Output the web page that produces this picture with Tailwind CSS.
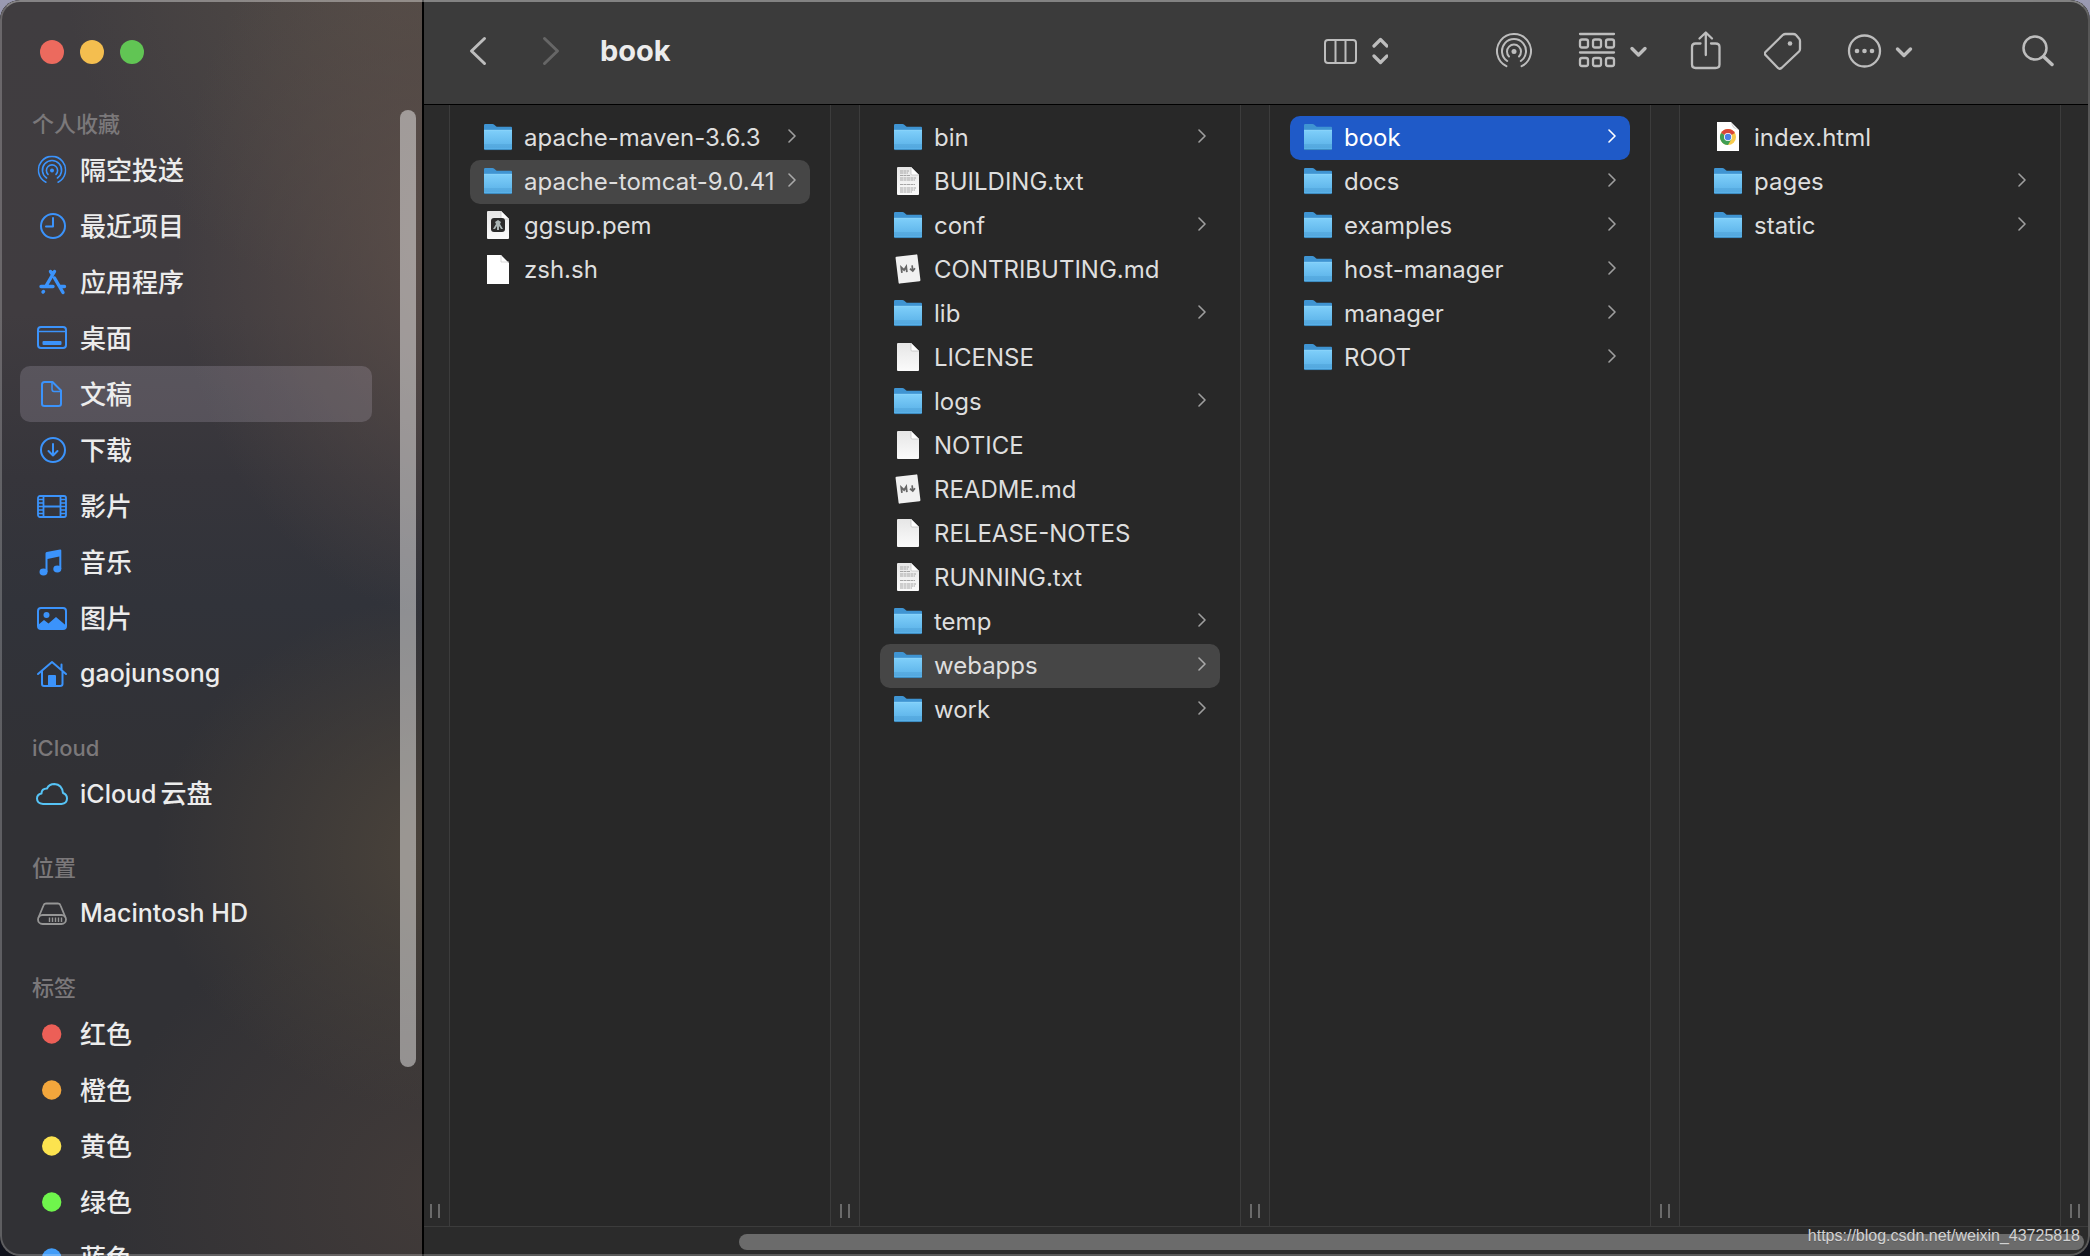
<!DOCTYPE html>
<html lang="zh-CN">
<head>
<meta charset="utf-8">
<title>book</title>
<script src="https://cdn.jsdelivr.net/npm/@tailwindcss/browser@4"></script>
</head>
<body class="h-screen overflow-hidden bg-linear-to-b from-[#9a9ab2] via-[#1c1c22] to-[#10121c] font-[Inter,'Noto_Sans_CJK_SC',sans-serif]">

<svg class="absolute size-0" aria-hidden="true">
  <defs>
    <linearGradient id="folderFront" x1="0" y1="0" x2="0" y2="1"><stop offset="0" stop-color="#7fcffa"/><stop offset="1" stop-color="#56aee6"/></linearGradient>
    <linearGradient id="paper" x1="0" y1="0" x2="0" y2="1"><stop offset="0" stop-color="#e6e6e6"/><stop offset="1" stop-color="#fbfbfb"/></linearGradient>
  </defs>
  <symbol id="folder" viewBox="0 0 28 32">
    <path d="M0 3.2Q0 2 1.2 2H8.500Q9.500 2 10.300 2.700L12 4.200Q12.600 4.800 13.600 4.800H27Q28 4.800 28 5.800V12H0Z" fill="#3f94d2"/>
    <path d="M0 8.200H28V26.600Q28 28 26.800 28H1.200Q0 28 0 26.600Z" fill="url(#folderFront)"/>
    <path d="M0 8.300H28" stroke="#96dcff" stroke-width=".8"/>
    <path d="M0 23H28M0 25H28" stroke="#4799d0" stroke-width=".7"/>
    <path d="M.5 27.600H27.500" stroke="#3580b4" stroke-width=".8"/>
  </symbol>
  <symbol id="page" viewBox="0 0 28 32">
    <path d="M3 2Q3 1 4 1H17L25 9V28Q25 29 24 29H4Q3 29 3 28Z" fill="url(#paper)"/>
    <path d="M17 1L25 9H18Q17 9 17 8Z" fill="#fff"/><path d="M17 1V8Q17 9 18 9H25" fill="none" stroke="#bdbdbd" stroke-width=".7"/>
  </symbol>
  <symbol id="page-white" viewBox="0 0 28 32">
    <path d="M3 1H17L25 9V30H3Z" fill="#fff"/>
    <path d="M17 1V8H25" fill="none" stroke="#cfcfcf" stroke-width=".8"/>
  </symbol>
  <symbol id="page-text" viewBox="0 0 28 32">
    <use href="#page"/>
    <path d="M6 5H15M6 7H14M6 9.500H16M6 12H22M6 14H21M6 18.500H21M6 22H22M6 24H21M6 26H18" stroke="#a5a5a5" stroke-width="1.200" stroke-dasharray="3 .5"/>
  </symbol>
  <symbol id="page-key" viewBox="0 0 28 32">
    <use href="#page"/>
    <rect x="7" y="8" width="14" height="14" rx="3" fill="#2b2b2b"/>
    <path d="M11 12L14 10L17 12L16 14L19 19H17L15 16V20H13V16L11 19H9L12 14Z" fill="#a9b4b4"/>
  </symbol>
  <symbol id="page-md" viewBox="0 0 28 32">
    <g transform="rotate(-7 14 15)"><rect x="3" y="1.500" width="22" height="27" rx="1" fill="#f1f1f1"/>
    <path d="M7.500 18V12.500L10 15.500L12.500 12.500V18" fill="none" stroke="#666" stroke-width="1.800"/>
    <path d="M18.500 12V17M16 15L18.500 17.600L21 15" fill="none" stroke="#666" stroke-width="1.700"/></g>
  </symbol>
  <symbol id="page-chrome" viewBox="0 0 28 32">
    <path d="M3 0H17L25 8V29H3Z" fill="#fff"/><path d="M17 0Q19 5 25 8L22 7Q18 6 17 0Z" fill="#cfcfcf"/>
    <circle cx="14" cy="15" r="8" fill="#f7cb4d"/>
    <path d="M14 15L7.070 11A8 8 0 0 1 20.930 11Z" fill="#d8473a"/>
    <path d="M14 15L7.070 11A8 8 0 0 0 14 23L17.500 17Z" fill="#3f9e55"/>
    <circle cx="14" cy="15" r="4" fill="#fff"/><circle cx="14" cy="15" r="3.200" fill="#4a7fe8"/>
  </symbol>
  <symbol id="go" viewBox="0 0 8 14"><path d="M1 1L7 7L1 13" fill="none" stroke="currentColor" stroke-width="1.600" stroke-linecap="round" stroke-linejoin="round"/></symbol>
  <symbol id="airdrop" viewBox="0 0 36 36">
    <g fill="none" stroke="currentColor" stroke-width="2" stroke-linecap="round">
      <path d="M10.400 33.200A17 17 0 1 1 25.600 33.200"/><path d="M11.200 28A12 12 0 1 1 24.800 28"/><path d="M13 23.500A7 7 0 1 1 23 23.500"/>
    </g><circle cx="18" cy="18.500" r="2.500" fill="currentColor"/>
  </symbol>
</svg>

<div class="relative flex h-full overflow-hidden rounded-[20px] bg-[#282828]">

  <aside class="relative w-106 shrink-0 overflow-hidden border-r-2 border-black bg-[radial-gradient(ellipse_280px_380px_at_108%_19%,#5a4d48,transparent),radial-gradient(ellipse_360px_360px_at_100%_-4%,#554d47,transparent),radial-gradient(ellipse_300px_260px_at_108%_68%,#4c443b,transparent),radial-gradient(ellipse_340px_300px_at_105%_95%,#423b39,transparent),linear-gradient(180deg,#403d40_0%,#403c40_25%,#36353b_38%,#31333a_48%,#313135_62%,#313135_100%)]">
    <div class="flex h-26 items-center gap-4 pl-10" role="group" aria-label="窗口">
      <button class="size-6 rounded-full bg-[#ec6a5e]" aria-label="关闭"></button>
      <button class="size-6 rounded-full bg-[#f4be4f]" aria-label="最小化"></button>
      <button class="size-6 rounded-full bg-[#61c554]" aria-label="缩放"></button>
    </div>

    <nav class="mt-0.5 flex flex-col gap-7 pr-[50px] pl-5 [&_a]:flex [&_a]:h-14 [&_a]:items-center [&_a]:gap-3 [&_a]:rounded-[10px] [&_a]:pl-4 [&_a]:text-[25px] [&_a]:font-medium [&_a]:text-[#ececec] [&_a:lang(zh)]:text-[26px] [&_h2]:h-9 [&_h2]:pl-3 [&_h2]:text-[22px] [&_h2]:leading-9 [&_h2]:font-medium [&_h2]:text-[#7b787a] [&_svg]:size-8 [&_svg]:shrink-0 [&_svg]:text-[#3b93fb]">
      <section>
        <h2>个人收藏</h2>
        <ul>
          <li><a href="#"><svg viewBox="-2 -2 40 40"><use href="#airdrop" width="36" height="36"/></svg>隔空投送</a></li>
          <li><a href="#"><svg viewBox="0 0 32 32" fill="none" stroke="currentColor" stroke-width="2"><circle cx="17" cy="16" r="12"/><path d="M17 8V16.500H10" stroke-linecap="round" stroke-linejoin="round"/></svg>最近项目</a></li>
          <li><a href="#"><svg viewBox="0 0 32 32" fill="none" stroke="currentColor" stroke-width="3.400" stroke-linecap="round"><path d="M18.500 5.500L10 20M14.500 5.500L16.500 8.500M18.500 12L27 26.500M5 20.500H17M23.500 20.500H28.500M7.500 25.500L7 26"/></svg>应用程序</a></li>
          <li><a href="#"><svg viewBox="0 0 32 32" fill="none" stroke="currentColor" stroke-width="2"><rect x="2" y="5" width="28" height="21" rx="3"/><path d="M2 9.500H30" stroke-width="1.500"/><rect x="6.500" y="19" width="19" height="4" rx="1" fill="currentColor" stroke="none"/></svg>桌面</a></li>
          <li><a href="#" aria-current="page" class="bg-[#e6dcf5]/17"><svg viewBox="0 0 32 32" fill="none" stroke="currentColor" stroke-width="2" stroke-linejoin="round"><path d="M6 6.500Q6 4 8.500 4H16.500L25 12.500V26Q25 28 22.500 28H8.500Q6 28 6 26Z"/><path d="M16 4V11Q16 13.500 18 13.500H25" stroke-width="1.500"/></svg>文稿</a></li>
          <li><a href="#"><svg viewBox="0 0 32 32" fill="none" stroke="currentColor" stroke-width="2" stroke-linecap="round" stroke-linejoin="round"><circle cx="17" cy="16" r="12"/><path d="M17 10V21.500M12.500 17L17 21.500L21.500 17"/></svg>下载</a></li>
          <li><a href="#"><svg viewBox="0 0 32 32" fill="none" stroke="currentColor" stroke-width="1.800"><rect x="2" y="6" width="28" height="21" rx="2"/><path d="M7.500 6V27M24.500 6V27M7.500 16.500H24.500"/><path d="M2 9.500H7.500M2 13H7.500M2 16.500H7.500M2 20H7.500M2 23.500H7.500M24.500 9.500H30M24.500 13H30M24.500 16.500H30M24.500 20H30M24.500 23.500H30" stroke-width="1.500"/></svg>影片</a></li>
          <li><a href="#"><svg viewBox="0 0 32 32" fill="currentColor"><ellipse cx="7.500" cy="26" rx="4" ry="3.400"/><ellipse cx="21.300" cy="23" rx="4" ry="3.400"/><path d="M9.500 26V7.500Q9.500 6.300 10.700 6L24 3.500Q25.300 3.300 25.300 4.500V23H23.300V10.500L11.500 13V26Z"/></svg>音乐</a></li>
          <li><a href="#"><svg viewBox="0 0 32 32"><rect x="2" y="6" width="28" height="21" rx="3" fill="none" stroke="currentColor" stroke-width="2"/><circle cx="10.500" cy="13" r="3" fill="currentColor"/><path d="M2 23L8 18L12.500 21.500L20 15L30 23.500V25Q30 27 27.500 27H4.500Q2 27 2 25Z" fill="currentColor"/></svg>图片</a></li>
          <li><a href="#" lang="en"><svg viewBox="0 0 32 32" fill="none" stroke="currentColor" stroke-width="2" stroke-linecap="round" stroke-linejoin="round"><path d="M2 16L16 4L30 16M25.500 12V6.500M6 13.500V26Q6 28 8 28H24Q26.500 28 26.500 26V13.500"/><path d="M13 27V18H19V27Z" fill="currentColor"/></svg>gaojunsong</a></li>
        </ul>
      </section>
      <section>
        <h2>iCloud</h2>
        <ul>
          <li><a href="#" lang="en"><svg viewBox="0 0 32 32" fill="none" stroke="#56c3f5" stroke-width="2" stroke-linejoin="round"><path d="M7 26Q1 25.500 1 20.500Q1 16.500 5.500 15.500Q5.500 10.500 11 10.500Q13 6 18.500 6Q26 6.500 27 15Q31 16.500 31 20.500Q31 25.500 25.500 26Z"/></svg><span class="flex items-baseline gap-1">iCloud<span class="text-[26px]">云盘</span></span></a></li>
        </ul>
      </section>
      <section>
        <h2>位置</h2>
        <ul>
          <li><a href="#" lang="en"><svg viewBox="0 0 32 32" fill="none" stroke="#969696" stroke-width="1.800" stroke-linejoin="round"><path d="M2.500 19.500L7.500 7.500Q8 5.500 10 5.500H22Q24 5.500 24.500 7.500L29.500 19.500"/><rect x="2" y="17" width="28" height="9" rx="4.500"/><path d="M13.500 19.500V24M16.500 19.500V24M19.500 19.500V24M22.500 19.500V24M25.500 19.500V24" stroke-width="1.400"/></svg>Macintosh HD</a></li>
        </ul>
      </section>
      <section>
        <h2>标签</h2>
        <ul>
          <li><a href="#"><svg viewBox="0 0 32 32"><circle cx="15.700" cy="16" r="9.700" fill="#ec5f57"/></svg>红色</a></li>
          <li><a href="#"><svg viewBox="0 0 32 32"><circle cx="15.700" cy="16" r="9.700" fill="#f2a63c"/></svg>橙色</a></li>
          <li><a href="#"><svg viewBox="0 0 32 32"><circle cx="15.700" cy="16" r="9.700" fill="#fce34f"/></svg>黄色</a></li>
          <li><a href="#"><svg viewBox="0 0 32 32"><circle cx="15.700" cy="16" r="9.700" fill="#6ff54c"/></svg>绿色</a></li>
          <li><a href="#"><svg viewBox="0 0 32 32"><circle cx="15.700" cy="16" r="9.700" fill="#439df8"/></svg>蓝色</a></li>
        </ul>
      </section>
    </nav>
    <div class="absolute top-[110px] right-1.5 h-[957px] w-4 rounded-full bg-white/45"></div>
  </aside>

  <main class="flex min-w-0 flex-1 flex-col pr-0.5">
    <header class="flex h-[105px] shrink-0 items-center border-b border-black bg-[#3b3b3b] pr-[34px] pb-0.5 pl-11 text-[#bdbdbd]">
      <button aria-label="后退"><svg class="h-9 w-5" viewBox="0 0 20 36" fill="none" stroke="currentColor" stroke-width="3" stroke-linecap="round" stroke-linejoin="round"><path d="M16.500 5.500L3.500 18L16.500 30.500"/></svg></button>
      <button aria-label="前进" class="ml-13 text-[#666]" disabled><svg class="h-9 w-5" viewBox="0 0 20 36" fill="none" stroke="currentColor" stroke-width="3" stroke-linecap="round" stroke-linejoin="round"><path d="M4.500 5.500L17.500 18L4.500 30.500"/></svg></button>
      <h1 class="ml-10 text-[29px] leading-9 font-bold text-[#ececec]">book</h1>
      <button aria-label="显示方式" class="ml-auto"><svg class="h-10 w-16" viewBox="0 0 64 40" fill="none" stroke="currentColor" stroke-width="2"><rect x="1" y="9" width="31" height="23" rx="3"/><path d="M11.500 9V32M21.500 9V32"/><path d="M50 15L56.500 8.500L63 15M50 25L56.500 31.500L63 25" stroke-width="3.200" stroke-linecap="round" stroke-linejoin="round"/></svg></button>
      <div class="ml-27 flex items-center gap-11">
        <button aria-label="隔空投送"><svg class="size-9"><use href="#airdrop"/></svg></button>
        <button aria-label="分组"><svg class="h-10 w-18" viewBox="0 0 72 40" fill="none" stroke="currentColor" stroke-width="2.300"><path d="M4 3H38M4 21.500H38" stroke-linecap="round"/><g><rect x="4" y="8.500" width="8" height="8" rx="2"/><rect x="17" y="8.500" width="8" height="8" rx="2"/><rect x="30" y="8.500" width="8" height="8" rx="2"/><rect x="4" y="27" width="8" height="8" rx="2"/><rect x="17" y="27" width="8" height="8" rx="2"/><rect x="30" y="27" width="8" height="8" rx="2"/></g><path d="M56 17.500L62.500 24L69 17.500" stroke-width="3.400" stroke-linecap="round" stroke-linejoin="round"/></svg></button>
        <button aria-label="共享"><svg class="h-10 w-7 overflow-visible" viewBox="0 -1 28 40" fill="none" stroke="currentColor" stroke-width="2.300" stroke-linecap="round" stroke-linejoin="round"><path d="M8.500 11.500H3.500Q0 11.500 0 15V32.500Q0 36 3.500 36H23.500Q27.500 36 27.500 32.500V15Q27.500 11.500 23.500 11.500H19M13.800 23V1M7.500 6.500L13.800 .5L20 6.500"/></svg></button>
        <button aria-label="标签"><svg class="h-10 w-9.5" viewBox="0 0 38 40" fill="none" stroke="currentColor" stroke-width="2.300" stroke-linejoin="round"><path d="M19 3.800Q20 3 21.500 3H29Q31 3 32 4L35 7.500Q36 8.500 36 10V18Q36 19.500 35 20.500L17.500 37Q15.500 38.500 14 37L1.500 24Q0 22.500 1.500 21Z"/><circle cx="26" cy="12.500" r="2.300" fill="currentColor" stroke="none"/></svg></button>
        <button aria-label="更多"><svg class="h-10 w-17" viewBox="0 0 68 40" fill="none" stroke="currentColor" stroke-width="2.300"><circle cx="18.500" cy="20" r="15.500"/><g fill="currentColor" stroke="none"><circle cx="11" cy="20" r="2.300"/><circle cx="18.500" cy="20" r="2.300"/><circle cx="26" cy="20" r="2.300"/></g><path d="M51.500 18L58 24.500L64.500 18" stroke-width="3.400" stroke-linecap="round" stroke-linejoin="round"/></svg></button>
      </div>
      <button aria-label="搜索" class="ml-27"><svg class="size-8" viewBox="0 0 32 32" fill="none" stroke="currentColor" stroke-width="2.500"><circle cx="13" cy="13" r="11.500"/><path d="M21.500 21.500L30 29.500" stroke-width="3.500" stroke-linecap="round"/></svg></button>
    </header>

    <div class="flex min-h-0 flex-1 text-[#dedede] [&_a]:flex [&_a]:h-11 [&_a]:items-center [&_a]:gap-3 [&_a]:rounded-[10px] [&_a]:pr-3.5 [&_a]:pl-3.5 [&_a]:text-2xl [&_a]:whitespace-nowrap [&_a>svg:first-child]:h-8 [&_a>svg:first-child]:w-7 [&_a>svg:first-child]:shrink-0 [&_a>svg:last-child:not(:first-child)]:mb-1 [&_a>svg:last-child:not(:first-child)]:ml-auto [&_a>svg:last-child:not(:first-child)]:h-3.5 [&_a>svg:last-child:not(:first-child)]:w-2 [&_a>svg:last-child:not(:first-child)]:shrink-0 [&_a>svg:last-child:not(:first-child)]:opacity-65 [&_ul]:min-w-0 [&_ul]:flex-1 [&_ul]:px-5 [&_ul]:pt-[11px]">
      <div class="flex w-[26px] items-end gap-1.5 border-r border-[#3c3c3c] bg-[#2b2b2b] pb-2 pl-1.5"><i class="h-3.5 w-0.5 bg-[#6a6a6a]"></i><i class="h-3.5 w-0.5 bg-[#6a6a6a]"></i></div>
      <ul>
        <li><a href="#"><svg><use href="#folder"/></svg>apache-maven-3.6.3<svg><use href="#go"/></svg></a></li>
        <li><a href="#" class="bg-[#464646]"><svg><use href="#folder"/></svg>apache-tomcat-9.0.41<svg><use href="#go"/></svg></a></li>
        <li><a href="#"><svg><use href="#page-key"/></svg>ggsup.pem</a></li>
        <li><a href="#"><svg><use href="#page-white"/></svg>zsh.sh</a></li>
      </ul>
      <div class="flex w-[30px] items-end gap-1.5 border-x border-[#3c3c3c] bg-[#2b2b2b] pb-2 pl-[9px]"><i class="h-3.5 w-0.5 bg-[#6a6a6a]"></i><i class="h-3.5 w-0.5 bg-[#6a6a6a]"></i></div>
      <ul>
        <li><a href="#"><svg><use href="#folder"/></svg>bin<svg><use href="#go"/></svg></a></li>
        <li><a href="#"><svg><use href="#page-text"/></svg>BUILDING.txt</a></li>
        <li><a href="#"><svg><use href="#folder"/></svg>conf<svg><use href="#go"/></svg></a></li>
        <li><a href="#"><svg><use href="#page-md"/></svg>CONTRIBUTING.md</a></li>
        <li><a href="#"><svg><use href="#folder"/></svg>lib<svg><use href="#go"/></svg></a></li>
        <li><a href="#"><svg><use href="#page"/></svg>LICENSE</a></li>
        <li><a href="#"><svg><use href="#folder"/></svg>logs<svg><use href="#go"/></svg></a></li>
        <li><a href="#"><svg><use href="#page"/></svg>NOTICE</a></li>
        <li><a href="#"><svg><use href="#page-md"/></svg>README.md</a></li>
        <li><a href="#"><svg><use href="#page"/></svg>RELEASE-NOTES</a></li>
        <li><a href="#"><svg><use href="#page-text"/></svg>RUNNING.txt</a></li>
        <li><a href="#"><svg><use href="#folder"/></svg>temp<svg><use href="#go"/></svg></a></li>
        <li><a href="#" class="bg-[#464646]"><svg><use href="#folder"/></svg>webapps<svg><use href="#go"/></svg></a></li>
        <li><a href="#"><svg><use href="#folder"/></svg>work<svg><use href="#go"/></svg></a></li>
      </ul>
      <div class="flex w-[30px] items-end gap-1.5 border-x border-[#3c3c3c] bg-[#2b2b2b] pb-2 pl-[9px]"><i class="h-3.5 w-0.5 bg-[#6a6a6a]"></i><i class="h-3.5 w-0.5 bg-[#6a6a6a]"></i></div>
      <ul>
        <li><a href="#" aria-current="true" class="bg-[#1f5ac8] text-white [&>svg:last-child:not(:first-child)]:opacity-100!"><svg><use href="#folder"/></svg>book<svg><use href="#go"/></svg></a></li>
        <li><a href="#"><svg><use href="#folder"/></svg>docs<svg><use href="#go"/></svg></a></li>
        <li><a href="#"><svg><use href="#folder"/></svg>examples<svg><use href="#go"/></svg></a></li>
        <li><a href="#"><svg><use href="#folder"/></svg>host-manager<svg><use href="#go"/></svg></a></li>
        <li><a href="#"><svg><use href="#folder"/></svg>manager<svg><use href="#go"/></svg></a></li>
        <li><a href="#"><svg><use href="#folder"/></svg>ROOT<svg><use href="#go"/></svg></a></li>
      </ul>
      <div class="flex w-[30px] items-end gap-1.5 border-x border-[#3c3c3c] bg-[#2b2b2b] pb-2 pl-[9px]"><i class="h-3.5 w-0.5 bg-[#6a6a6a]"></i><i class="h-3.5 w-0.5 bg-[#6a6a6a]"></i></div>
      <ul>
        <li><a href="#"><svg><use href="#page-chrome"/></svg>index.html</a></li>
        <li><a href="#"><svg><use href="#folder"/></svg>pages<svg><use href="#go"/></svg></a></li>
        <li><a href="#"><svg><use href="#folder"/></svg>static<svg><use href="#go"/></svg></a></li>
      </ul>
      <div class="flex w-7 items-end gap-1.5 border-l border-[#3c3c3c] bg-[#2b2b2b] pb-2 pl-[9px]"><i class="h-3.5 w-0.5 bg-[#6a6a6a]"></i><i class="h-3.5 w-0.5 bg-[#6a6a6a]"></i></div>
    </div>

    <div class="flex h-[30px] shrink-0 justify-end border-t border-[#3c3c3c] bg-[#2b2b2b] pt-[7px] pr-1">
      <div class="h-4 w-[81%] rounded-full bg-[#6b6b6b]"></div>
    </div>
  </main>

  <div class="pointer-events-none absolute inset-0 rounded-[20px] border-2 border-white/22 border-t-white/36"></div>
  <p class="absolute right-2.5 bottom-2 font-['Liberation_Sans',sans-serif] text-base text-[#d2d2d2] text-shadow-2xs">https://blog.csdn.net/weixin_43725818</p>
</div>
</body>
</html>
